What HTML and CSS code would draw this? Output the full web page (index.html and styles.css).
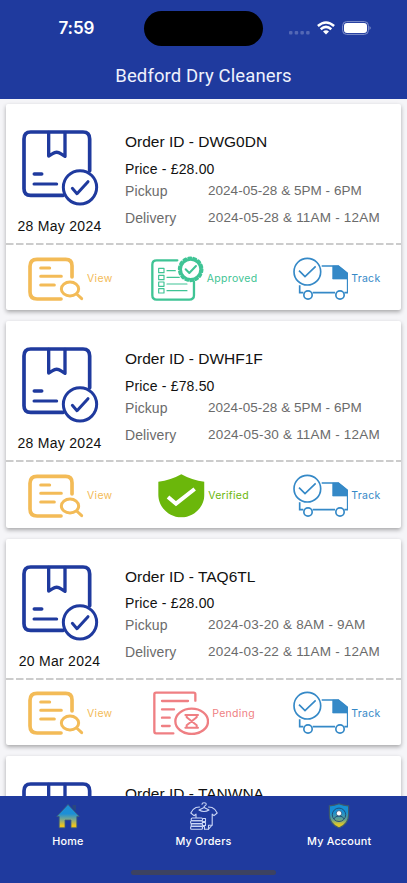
FILE: index.html
```html
<!DOCTYPE html>
<html lang="en">
<head>
<meta charset="utf-8">
<meta name="viewport" content="width=device-width, initial-scale=1">
<title>Bedford Dry Cleaners</title>
<link rel="stylesheet" href="styles.css">
</head>
<body>
<svg class="defs" aria-hidden="true">
  <defs>
    <symbol id="package" viewBox="60 84 240 240">
      <g fill="none" stroke="#1f3a9e" stroke-width="11" stroke-linecap="round" stroke-linejoin="round">
        <path d="M190 286H92Q72 286 72 266V117Q72 96 92 96H249Q269 96 269 117V212"/>
        <path d="M146 97V168L158 161Q170 152 182 161L195 169V97" stroke-width="10"/>
        <path d="M103 222H125" stroke-width="11"/>
        <path d="M102 252H170" stroke-width="9"/>
        <circle cx="240" cy="262" r="50" stroke-width="9"/>
        <path d="M217 265L231 281L264 245" stroke-width="9"/>
      </g>
    </symbol>
    <symbol id="view" viewBox="84 64 167 132">
      <g fill="none" stroke="#f3bb57" stroke-width="11" stroke-linecap="round" stroke-linejoin="round">
        <path d="M216 124V90Q216 71 197 71H111Q90 71 90 92V169Q90 190 111 190H183"/>
        <path d="M122 97H149M122 122H184M122 148H163" stroke-width="9"/>
        <ellipse cx="210" cy="160" rx="26" ry="21" stroke-width="9"/>
        <path d="M230 175L245 189" stroke-width="9"/>
      </g>
    </symbol>
    <symbol id="approved" viewBox="45 60 160 136">
      <g fill="none" stroke="#3fc495" stroke-linecap="round" stroke-linejoin="round">
        <path d="M124 73H62Q49 73 49 86V178Q49 191 62 191H160Q174 191 174 178V137" stroke-width="7"/>
        <path d="M68 97h16v13h-16zM68 118h16v13h-16zM68 138h16v13h-16zM68 158h16v13h-16z" stroke-width="3.500"/>
        <path d="M93 104H118M93 124H130M93 144H153M93 164H153" stroke-width="3.500"/>
        <circle cx="164" cy="100" r="35" stroke-width="7" stroke-dasharray="8 7.700"/>
        <circle cx="164" cy="100" r="30" stroke-width="8"/>
        <path d="M149 100L160 111L180 90" stroke-width="6"/>
      </g>
    </symbol>
    <symbol id="track" viewBox="66 64 167 132">
      <g fill="none" stroke="#3589c7" stroke-width="5">
        <circle cx="109" cy="108" r="40"/>
        <path d="M84 105L102 123L134 92"/>
        <path d="M152 91H202L230 114V171H220M192 171H125M97 171H86V149"/>
        <path d="M185 91H203L230 114V130H185Z" fill="#3589c7" stroke-width="2"/>
        <circle cx="111" cy="178" r="12.500"/>
        <circle cx="207" cy="178" r="12.500"/>
      </g>
    </symbol>
    <symbol id="verified" viewBox="68 57 140 131">
      <path d="M138 58Q170 76 207 80V119C207 154 177 187 138 187S69 154 69 119V80Q106 76 138 58Z" fill="#6bb70b"/>
      <path d="M98 126L122 146L178 102" fill="none" stroke="#fff" stroke-width="12"/>
    </symbol>
    <symbol id="pending" viewBox="52 62 170 132">
      <g fill="none" stroke="#ef7f83" stroke-width="7" stroke-linecap="round" stroke-linejoin="round">
        <path d="M179 91V72Q179 67 174 67H61Q56 67 56 72V183Q56 189 61 189H113"/>
        <path d="M79 92H157M79 117H115M79 142H102M79 167H102"/>
        <ellipse cx="168" cy="153" rx="49" ry="38"/>
        <path d="M149 134H187M149 172H187M153 135V141L183 165V171M183 135V141L153 165V171" stroke-width="6"/>
      </g>
    </symbol>
  </defs>
</svg>

<div class="app">
  <header class="header">
    <div class="status">
      <span class="clock">7:59</span>
      <span class="island"></span>
      <span class="signals">
        <svg class="cell" viewBox="0 0 21 4" fill="#5468b5"><rect width="3.500" height="3.500" rx="1"/><rect x="5.700" width="3.500" height="3.500" rx="1"/><rect x="11.400" width="3.500" height="3.500" rx="1"/><rect x="17.100" width="3.500" height="3.500" rx="1"/></svg>
        <svg class="wifi" viewBox="0 0 18 14" fill="none" stroke="#fff" stroke-width="2.500"><path d="M.9 5Q9-2 17.100 5M3.700 8.300Q9 3.500 14.300 8.300"/><path d="M6 10.600Q9 8 12 10.600L9 13.600Z" fill="#fff" stroke="none"/></svg>
        <svg class="battery" viewBox="0 0 30 14"><rect x=".6" y=".6" width="25.800" height="12.800" rx="4" fill="none" stroke="#8292ca" stroke-width="1"/><rect x="2" y="2" width="23" height="10" rx="3" fill="#fff"/><path d="M27.500 5Q30 7 27.500 9Z" fill="#8292ca"/></svg>
      </span>
    </div>
    <h1 class="title">Bedford Dry Cleaners</h1>
  </header>

  <main class="orders">
    <article class="card">
      <div class="summary">
        <div class="parcel"><svg class="package"><use href="#package"/></svg><time>28 May 2024</time></div>
        <div class="details">
          <h2>Order ID - DWG0DN</h2>
          <p class="price">Price - £28.00</p>
          <dl><dt>Pickup</dt><dd>2024-05-28 &amp; 5PM - 6PM</dd><dt>Delivery</dt><dd class="wide">2024-05-28 &amp; 11AM - 12AM</dd></dl>
        </div>
      </div>
      <svg class="divider"><line x1="0" y1="1" x2="395" y2="1"/></svg>
      <div class="actions">
        <a class="action view"><svg><use href="#view"/></svg>View</a>
        <a class="action approved"><svg><use href="#approved"/></svg>Approved</a>
        <a class="action track"><svg><use href="#track"/></svg>Track</a>
      </div>
    </article>

    <article class="card">
      <div class="summary">
        <div class="parcel"><svg class="package"><use href="#package"/></svg><time>28 May 2024</time></div>
        <div class="details">
          <h2>Order ID - DWHF1F</h2>
          <p class="price">Price - £78.50</p>
          <dl><dt>Pickup</dt><dd>2024-05-28 &amp; 5PM - 6PM</dd><dt>Delivery</dt><dd class="wide">2024-05-30 &amp; 11AM - 12AM</dd></dl>
        </div>
      </div>
      <svg class="divider"><line x1="0" y1="1" x2="395" y2="1"/></svg>
      <div class="actions">
        <a class="action view"><svg><use href="#view"/></svg>View</a>
        <a class="action verified"><svg><use href="#verified"/></svg>Verified</a>
        <a class="action track"><svg><use href="#track"/></svg>Track</a>
      </div>
    </article>

    <article class="card">
      <div class="summary">
        <div class="parcel"><svg class="package"><use href="#package"/></svg><time>20 Mar 2024</time></div>
        <div class="details">
          <h2>Order ID - TAQ6TL</h2>
          <p class="price">Price - £28.00</p>
          <dl><dt>Pickup</dt><dd class="wide">2024-03-20 &amp; 8AM - 9AM</dd><dt>Delivery</dt><dd class="wide">2024-03-22 &amp; 11AM - 12AM</dd></dl>
        </div>
      </div>
      <svg class="divider"><line x1="0" y1="1" x2="395" y2="1"/></svg>
      <div class="actions">
        <a class="action view"><svg><use href="#view"/></svg>View</a>
        <a class="action pending"><svg><use href="#pending"/></svg>Pending</a>
        <a class="action track"><svg><use href="#track"/></svg>Track</a>
      </div>
    </article>

    <article class="card">
      <div class="summary">
        <div class="parcel"><svg class="package"><use href="#package"/></svg></div>
        <div class="details"><h2>Order ID - TANWNA</h2></div>
      </div>
    </article>
  </main>

  <footer class="footer">
    <nav class="tabs">
      <a class="tab">
        <svg viewBox="0 0 28 28">
          <defs><linearGradient id="sky" x1="0" y1="0" x2="0" y2="1"><stop offset=".4" stop-color="#1c8fd6"/><stop offset=".65" stop-color="#7fa98a"/><stop offset=".9" stop-color="#edc51f"/></linearGradient></defs>
          <path d="M18.500 3h3.500v6l-3.500-3z" fill="#2a477f"/>
          <path d="M14 2.500L2.800 14.500H5.200V25.800H11V18H17V25.800H22.800V14.500H25.200Z" fill="url(#sky)" stroke="#3f5d78" stroke-width=".8"/>
        </svg>
        <span>Home</span>
      </a>
      <a class="tab">
        <svg viewBox="0 0 28 28" fill="none" stroke="#cbd6f6" stroke-width="1.100" stroke-linejoin="round" stroke-linecap="round">
          <path d="M12 2.300Q12 .7 14 .7Q16.300.7 16.200 2.500Q16 3.800 14.200 4.200V5.500L9 8Q14 11 19 8L14.200 5.500"/>
          <path d="M9.500 5L6 5.500Q2.500 7 .8 11L4 13.700L6 12.200V15.500M18.500 5L22 5.500Q25.500 7 27.200 11L24 13.700L22.200 12.200V23L18.500 27.200H14.500"/>
          <path d="M18.500 27V23.300H22"/>
          <rect x="1.200" y="16" width="11.300" height="2.800" rx="1"/><rect x=".6" y="18.800" width="11.900" height="2.800" rx="1"/><rect x="1.200" y="21.600" width="11.300" height="2.800" rx="1"/><rect x=".6" y="24.400" width="11.900" height="2.800" rx="1"/>
          <path d="M13 16.500h2.500v3H13M13 20.500h2.500v3H13M13 24.500h1.500V27"/>
        </svg>
        <span>My Orders</span>
      </a>
      <a class="tab">
        <svg viewBox="0 0 28 28">
          <defs><linearGradient id="shield" x1="0" y1="0" x2="0" y2="1"><stop offset=".35" stop-color="#168fd3"/><stop offset=".65" stop-color="#63a18d"/><stop offset=".85" stop-color="#dcc52b"/></linearGradient></defs>
          <path d="M14 1.800Q18.500 3.600 23.600 3.800V13Q23.500 22 14 26Q4.500 22 4.400 13V3.800Q9.500 3.600 14 1.800Z" fill="url(#shield)" stroke="#3d5b6c" stroke-width="1.200"/>
          <circle cx="14" cy="12.800" r="6.700" fill="none" stroke="#234f78" stroke-width="1"/>
          <path d="M8.800 17Q10 14 14 14Q18 14 19.200 17" fill="none" stroke="#234f78"/>
          <circle cx="14" cy="11.300" r="2.700" fill="#fff" stroke="#234f78" stroke-width=".8"/>
        </svg>
        <span>My Account</span>
      </a>
    </nav>
    <div class="home-bar"></div>
  </footer>
</div>
</body>
</html>
```
FILE: styles.css
```css
* { box-sizing: border-box; }
body, h1, h2, p, dl, dd { margin: 0; font-weight: 400; }
body { font-family: "Liberation Sans", Arial, sans-serif; background: #f5f5f8; }
.defs { position: absolute; width: 0; height: 0; }
.app { display: flex; flex-direction: column; height: 883px; overflow: hidden; }

.header { flex: none; height: 98.500px; background: #1f3a9e; color: #fff; }
.status { display: grid; grid-template-columns: 144px 119px 1fr; align-items: center; height: 56px; }
.clock { padding-left: 58.500px; font: 600 17px Inter, sans-serif; letter-spacing: -.1px; }
.island { height: 35px; border-radius: 18px; background: #000; }
.signals { display: flex; align-items: center; padding-left: 26px; }
.cell { width: 21px; height: 4px; margin-top: 9px; }
.wifi { width: 18px; height: 14px; margin-left: 6.500px; }
.battery { width: 30px; height: 14px; margin-left: 7px; }
.title { padding-top: 8px; text-align: center; font-family: Roboto, sans-serif; font-size: 18.500px; line-height: 24px; color: #eef1fc; letter-spacing: .12px; }

.orders { flex: 1; min-height: 0; overflow: hidden; display: flex; flex-direction: column; gap: 11px; padding: 5.500px 6px 0; }
.card { flex: none; height: 206.400px; background: #fff; border-radius: 2px; box-shadow: 0 2px 4px rgba(0,0,0,.32); }
.summary { display: flex; height: 139px; }
.parcel { width: 107px; padding-top: 24px; text-align: center; }
.package { display: block; width: 80px; height: 80px; margin-left: 14px; }
.parcel time { display: block; margin-top: 9px; font-size: 14px; line-height: 18px; color: #111; letter-spacing: .28px; }
.details { flex: 1; padding: 28px 0 0 12px; color: #111; }
.details h2 { font-size: 15.500px; line-height: 20px; letter-spacing: 0; }
.price { margin-top: 7.500px; font-size: 14px; line-height: 19px; letter-spacing: .17px; }
.details dl { display: grid; grid-template-columns: 83px 1fr; row-gap: 9px; margin-top: 3px; font-size: 14px; line-height: 18px; color: #6b6b6b; }
.details dt { letter-spacing: .1px; }
.details dd { white-space: nowrap; font-size: 13.500px; letter-spacing: .03px; }
.details .wide { letter-spacing: .2px; }
.divider { display: block; width: 100%; height: 2px; }
.divider line { stroke: #999; stroke-width: 1.200; stroke-dasharray: 7.500 2.500; }

.actions { display: flex; height: 65px; }
.action { flex: 1; display: flex; align-items: center; justify-content: center; gap: 3px; padding-top: 2px; font-family: Inter, sans-serif; font-size: 10.500px; letter-spacing: .3px; }
.action svg { flex: none; width: 55.700px; height: 44px; }
.view { color: #f3bb57; padding-right: 4.500px; }
.approved { color: #3fc495; padding-right: 3.500px; }
.approved svg { width: 53.300px; height: 45.300px; }
.verified { color: #6bb70b; padding-right: 4px; }
.verified svg { width: 46.700px; height: 43.700px; }
.pending { color: #ef7f83; padding-right: 4px; }
.pending svg { width: 56.700px; }
.track { color: #3589c7; }

.footer { flex: none; height: 87px; background: #1f3a9e; }
.tabs { display: flex; padding-top: 6px; }
.tab { flex: 1; display: flex; flex-direction: column; align-items: center; color: #fff; font: 500 10.800px/14px Inter, sans-serif; letter-spacing: .2px; }
.tab svg { width: 28px; height: 28px; }
.tab span { margin-top: 4.500px; }
.home-bar { width: 145px; height: 5px; margin: 21.500px auto 0; border-radius: 3px; background: #3c4261; }
```
